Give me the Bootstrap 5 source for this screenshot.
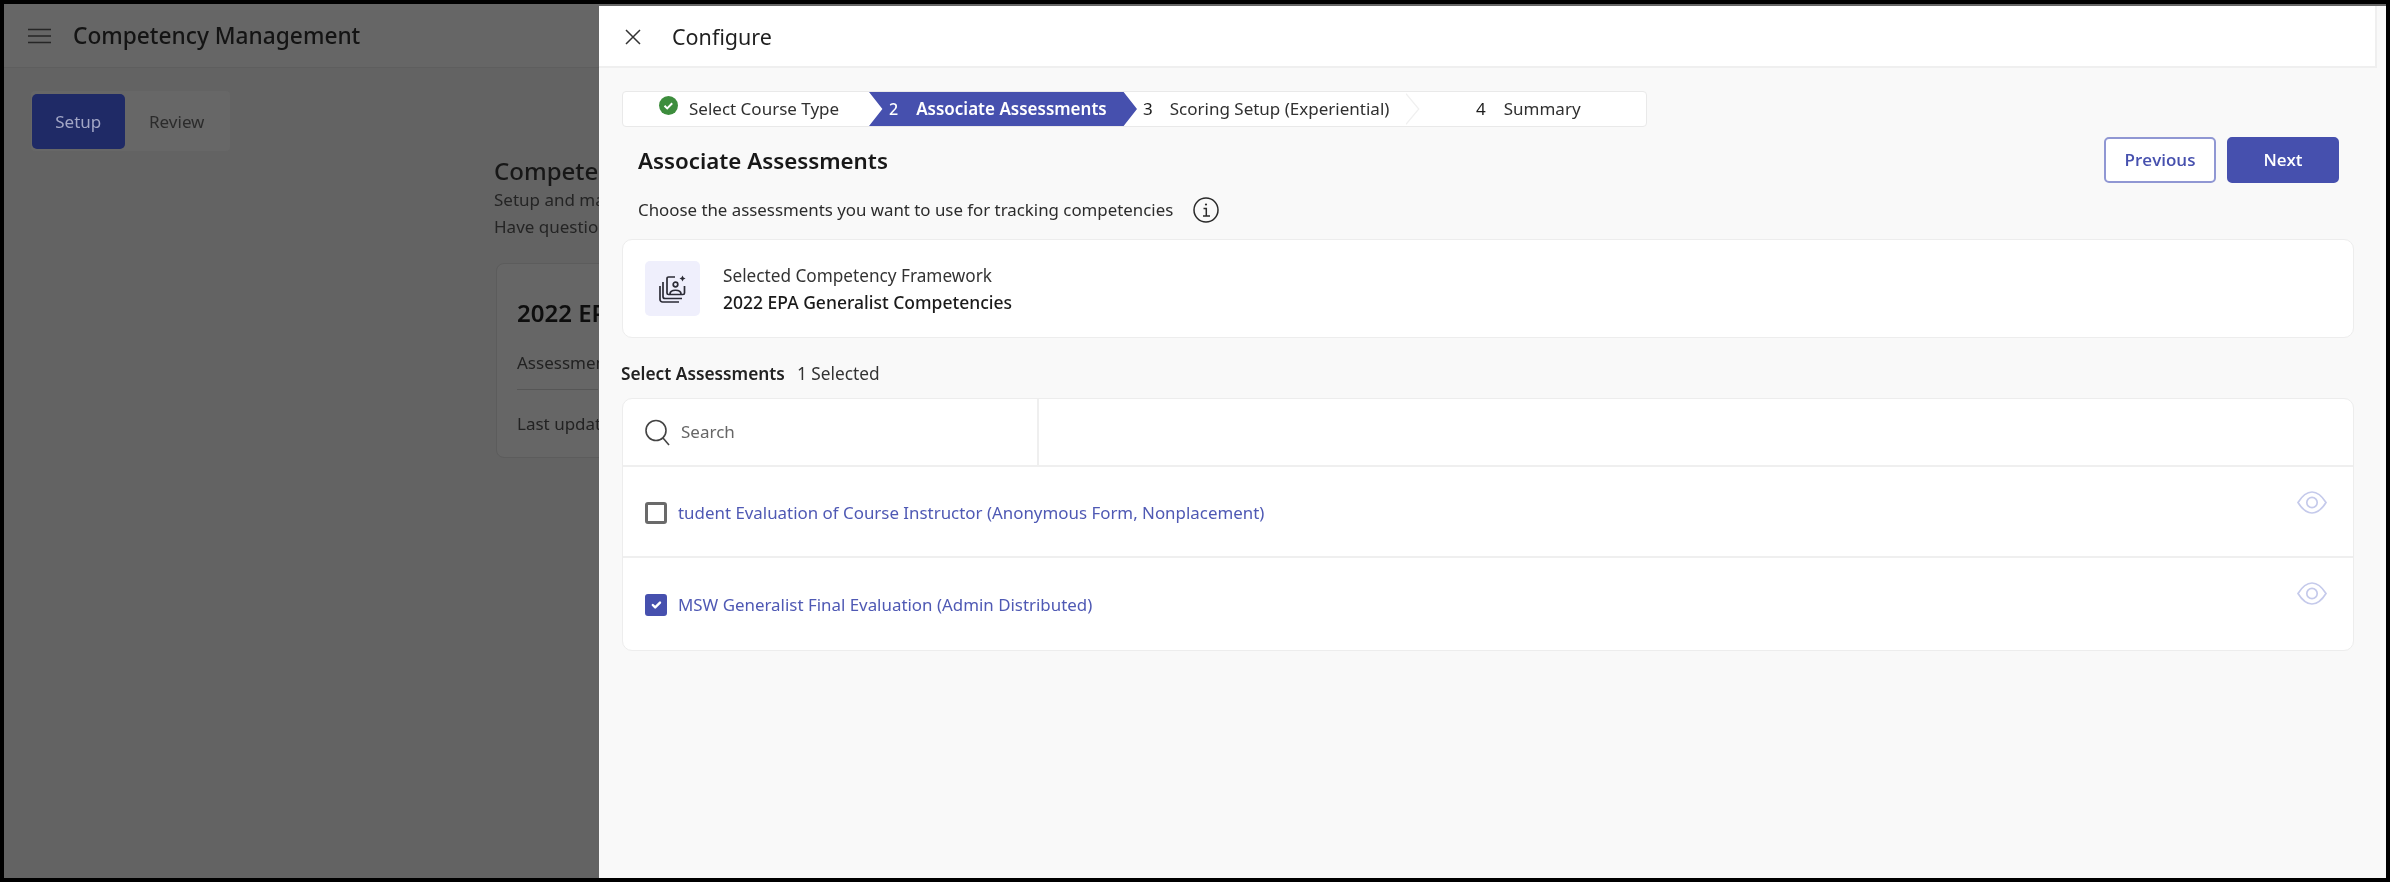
<!DOCTYPE html>
<html lang="en">
<head>
  <meta charset="UTF-8" />
  <meta name="viewport" content="width=device-width, initial-scale=1.0" />
  <title>Competency Management</title>
  <link href="https://cdn.jsdelivr.net/npm/bootstrap@5.3.3/dist/css/bootstrap.min.css" rel="stylesheet">
  <style>
    html, body { height: 100%; }
    body {
      background: #000;
      font-family: "Noto Sans", "Open Sans", sans-serif;
      color: #1c1c1c;
      overflow: hidden;
    }
    #frame {
      position: relative;
      height: 874px;
      margin: 4px;
      background: #636363;
      overflow: hidden;
      filter: blur(.5px);
    }
    /* page behind the drawer */
    #page-bar { height: 64px; background: #666; border-bottom: 1px solid #5e5e5e; padding-left: 24px; }
    #page-bar h1 { font-size: 22.700px; font-weight: 500; margin: 0 0 0 22px; color: #141414; }
    #page-tabs { background: #676767; width: 199px; height: 60px; margin: 23px 0 0 27px; padding: 3px 1px; border-radius: 4px; }
    #page-tabs span { height: 55px; font-size: 17px; color: #2b2b2b; }
    #page-tabs .tab-on { background: #1f2a66; color: #a3a7c6; border-radius: 5px; width: 93px; }
    #page-tabs .tab-off { width: 105px; }
    #page-info { margin: 5px 0 0 490px; width: 105px; overflow: hidden; white-space: nowrap; }
    #page-info h2 { font-size: 24px; font-weight: 500; margin: 0; color: #171717; line-height: 30px; }
    #page-info p { font-size: 17px; line-height: 27px; margin: 0; color: #242424; }
    #page-card { background: #666; border: 1px solid #5c5c5c; border-radius: 8px; margin: 23px -20px 0 2px; height: 195px; padding: 32px 20px 0; }
    #page-card h3 { font-size: 24px; font-weight: 600; color: #0e0e0e; margin: 0; line-height: 34px; }
    #page-card div { font-size: 17px; color: #222; }
    #page-card .line-a { padding: 21px 0 14px; border-bottom: 1px solid #565656; line-height: 24px; }
    #page-card .line-b { padding-top: 22px; line-height: 24px; }

    /* drawer */
    #drawer {
      position: absolute;
      top: 2px; right: 0; bottom: 0;
      width: 1787px;
      background: #f9f9f9;
    }
    #drawer-top {
      height: 62px; width: 1778px; background: #fff;
      border-right: 2px solid #efefef; border-bottom: 2px solid #efefef;
      padding: 2px 0 0 26px;
    }
    #drawer-top span { font-size: 21.500px; margin-left: 31px; color: #1f1f1f; }
    #drawer-body { padding: 23px 32px 0 23px; }

    #steps {
      height: 36px; width: 1025px; background: #fff;
      border: 1px solid #e9e9e9; border-radius: 4px;
      font-size: 17px; color: #303030; overflow: hidden;
    }
    #steps > div { height: 100%; white-space: nowrap; flex: none; }
    #steps b { font-weight: 400; font-size: 17px; color: #1c1c1c; }
    #step-a { width: 246px; padding-left: 36px; gap: 11px; }
    #step-b {
      width: 268px; padding-left: 20px; gap: 18px;
      background: #4650ae; color: #fff; font-weight: 600;
      clip-path: polygon(0 0, 95% 0, 100% 50%, 95% 100%, 0 100%, 5% 50%);
    }
    #step-b b { color: #fff; font-size: 16px; font-weight: 500; }
    #step-c { width: 283px; padding-left: 6px; gap: 17px; }
    #step-c svg { margin-left: auto; }
    #step-d { padding-left: 56px; gap: 18px; }

    #title-row { margin-top: 8px; padding-left: 16px; height: 88px; }
    #title-row h2 { font-size: 22.300px; font-weight: 600; margin: 6px 0 0; line-height: 40px; color: #181818; }
    #title-row p { font-size: 16.850px; margin: 16px 0 0; color: #2c2c2c; line-height: 26px; }
    #title-row svg { margin-left: 20px; }
    .btn-prev, .btn-next { width: 112px; height: 46px; font-size: 17px; font-weight: 600; border-radius: 5px; margin-top: 2px; padding: 0; font-family: "Open Sans", sans-serif; }
    .btn-prev { background: #fff; border: 2px solid #9097d3; color: #4650ae; }
    .btn-next { background: #4650ae; border: 2px solid #4650ae; color: #fff; margin-left: 11px; }
    #title-btns { margin-right: 15px; }

    .panel-card { width: 1732px; background: #fff; border: 1px solid #ededed; border-radius: 10px; overflow: hidden; }
    #fw-card { height: 99px; padding-left: 22px; margin-top: 16px; }
    #fw-icon { width: 55px; height: 55px; background: #efeffc; border-radius: 5px; }
    #fw-text { margin-left: 23px; font-size: 17.200px; line-height: 27px; }
    #fw-text div:first-child { color: #333; }
    #fw-text div:last-child { font-weight: 500; color: #1a1a1a; font-size: 17.500px; }

    #sel-label { font-size: 17.300px; margin: 23px 0 11px -1px; line-height: 26px; }
    #sel-label strong { font-weight: 600; color: #222; }
    #sel-label span { margin-left: 12px; color: #333; }

    #search-row { height: 68px; border-bottom: 2px solid #efefef; }
    #search-box { width: 416px; height: 100%; border-right: 2px solid #efefef; padding-left: 22px; font-size: 17px; color: #666; gap: 11px; }
    .asm-row { height: 91px; padding: 2px 26px 0 22px; border-bottom: 2px solid #efefef; position: relative; }
    .asm-row:last-child { border-bottom: 0; height: 92px; }
    .asm-row input.form-check-input {
      width: 22px; height: 22px; margin: 0 11px 0 0; border: 3px solid #6a6a6a; border-radius: 3px; flex: none;
    }
    .asm-row input.form-check-input:checked { background-color: #4650ae; border-color: #4650ae; }
    .asm-row a { color: #4f59b4; font-size: 16.900px; text-decoration: none; }
    .asm-eye { position: absolute; right: 26px; top: 24px; }
  </style>
</head>
<body>
  <div id="frame">

    <!-- page behind -->
    <div id="page-bar" class="d-flex align-items-center">
      <svg width="23" height="16" viewBox="0 0 23 16" fill="none" stroke="#262626" stroke-width="1.600"><path d="M0 1.500h23M0 8h23M0 14.500h23"/></svg>
      <h1>Competency Management</h1>
    </div>
    <div id="page-tabs" class="d-flex">
      <span class="tab-on d-flex align-items-center justify-content-center">Setup</span>
      <span class="tab-off d-flex align-items-center justify-content-center">Review</span>
    </div>
    <!-- cut off by the drawer, only the visible part of each text -->
    <div id="page-info">
      <h2>Competen</h2>
      <p>Setup and ma</p>
      <p>Have questio</p>
      <div id="page-card">
        <h3>2022 EP</h3>
        <div class="line-a">Assessmen</div>
        <div class="line-b">Last updat</div>
      </div>
    </div>

    <!-- drawer -->
    <div id="drawer">
      <div id="drawer-top" class="d-flex align-items-center">
        <svg width="16" height="16" viewBox="0 0 16 16" fill="none" stroke="#333" stroke-width="1.500"><path d="M1 1l14 14M15 1L1 15"/></svg>
        <span>Configure</span>
      </div>
      <div id="drawer-body">
        <div id="steps" class="d-flex">
          <div id="step-a" class="d-flex align-items-center">
            <svg width="19" height="19" viewBox="0 0 19 19" class="mb-2"><circle cx="9.500" cy="9.500" r="9.500" fill="#3d8d3d"/><path d="M5.500 9.800l2.700 2.600 5-5.200" fill="none" stroke="#fff" stroke-width="2"/></svg>
            <span>Select Course Type</span>
          </div>
          <div id="step-b" class="d-flex align-items-center"><b>2</b><span>Associate Assessments</span></div>
          <div id="step-c" class="d-flex align-items-center"><b>3</b><span>Scoring Setup (Experiential)</span>
            <svg width="16" height="36" viewBox="0 0 16 36" fill="none" stroke="#f0f0f0" stroke-width="1.500"><path d="M0 0l15 18L0 36"/></svg>
          </div>
          <div id="step-d" class="d-flex align-items-center"><b>4</b><span>Summary</span></div>
        </div>

        <div id="title-row" class="d-flex justify-content-between">
          <div>
            <h2>Associate Assessments</h2>
            <p class="d-flex align-items-center">Choose the assessments you want to use for tracking competencies
              <svg width="26" height="26" viewBox="0 0 26 26" fill="none" stroke="#2a2a2a" stroke-width="1.500"><circle cx="13" cy="13" r="12"/><path d="M10.500 11.500H13.300V19M10 19h7"/><circle cx="13" cy="7.500" r="1.100" fill="#2a2a2a" stroke="none"/></svg>
            </p>
          </div>
          <div id="title-btns" class="d-flex align-items-start">
            <button class="btn btn-prev">Previous</button>
            <button class="btn btn-next">Next</button>
          </div>
        </div>

        <div id="fw-card" class="panel-card d-flex align-items-center">
          <div id="fw-icon" class="d-flex align-items-center justify-content-center">
            <svg width="28" height="29" viewBox="0 0 28 29" fill="none" stroke="#2b2b35" stroke-width="1.700"><path d="M16 3H9.500A1.500 1.500 0 0 0 8 4.500V19a1.500 1.500 0 0 0 1.500 1.500H24a1.500 1.500 0 0 0 1.500-1.500V12"/><path d="M4 8v14.500A2 2 0 0 0 6 24.500h17"/><path d="M1 12v13.500A2.500 2.500 0 0 0 3.500 28H20" /><circle cx="16.500" cy="10.500" r="2.300"/><path d="M11 20c0-5 11-5 11 0"/><path d="M23.500 1.500l1 2 2 1-2 1-1 2-1-2-2-1 2-1z" fill="#2b2b35" stroke="none"/></svg>
          </div>
          <div id="fw-text">
            <div>Selected Competency Framework</div>
            <div>2022 EPA Generalist Competencies</div>
          </div>
        </div>

        <div id="sel-label"><strong>Select Assessments</strong><span>1 Selected</span></div>

        <div class="panel-card">
          <div id="search-row">
            <div id="search-box" class="d-flex align-items-center">
              <svg width="25" height="27" viewBox="0 0 25 27" fill="none" stroke="#444" stroke-width="1.600"><circle cx="11" cy="11.500" r="10"/><path d="M18 19l6 7"/></svg>
              <span>Search</span>
            </div>
          </div>
          <div class="asm-row d-flex align-items-center">
            <input class="form-check-input" type="checkbox">
            <a href="#">tudent Evaluation of Course Instructor (Anonymous Form, Nonplacement)</a>
            <svg class="asm-eye" width="30" height="23" viewBox="0 0 30 23" fill="none" stroke="#c5caeb" stroke-width="1.700"><path d="M1 11.500C6 3.500 10 1 15 1s9 2.500 14 10.500C24 19.500 20 22 15 22S6 19.500 1 11.500z"/><circle cx="15" cy="11.500" r="5.200"/></svg>
          </div>
          <div class="asm-row d-flex align-items-center">
            <input class="form-check-input" type="checkbox" checked>
            <a href="#">MSW Generalist Final Evaluation (Admin Distributed)</a>
            <svg class="asm-eye" width="30" height="23" viewBox="0 0 30 23" fill="none" stroke="#c5caeb" stroke-width="1.700"><path d="M1 11.500C6 3.500 10 1 15 1s9 2.500 14 10.500C24 19.500 20 22 15 22S6 19.500 1 11.500z"/><circle cx="15" cy="11.500" r="5.200"/></svg>
          </div>
        </div>
      </div>
    </div>
  </div>
  <script src="https://cdn.jsdelivr.net/npm/bootstrap@5.3.3/dist/js/bootstrap.bundle.min.js"></script>
</body>
</html>
